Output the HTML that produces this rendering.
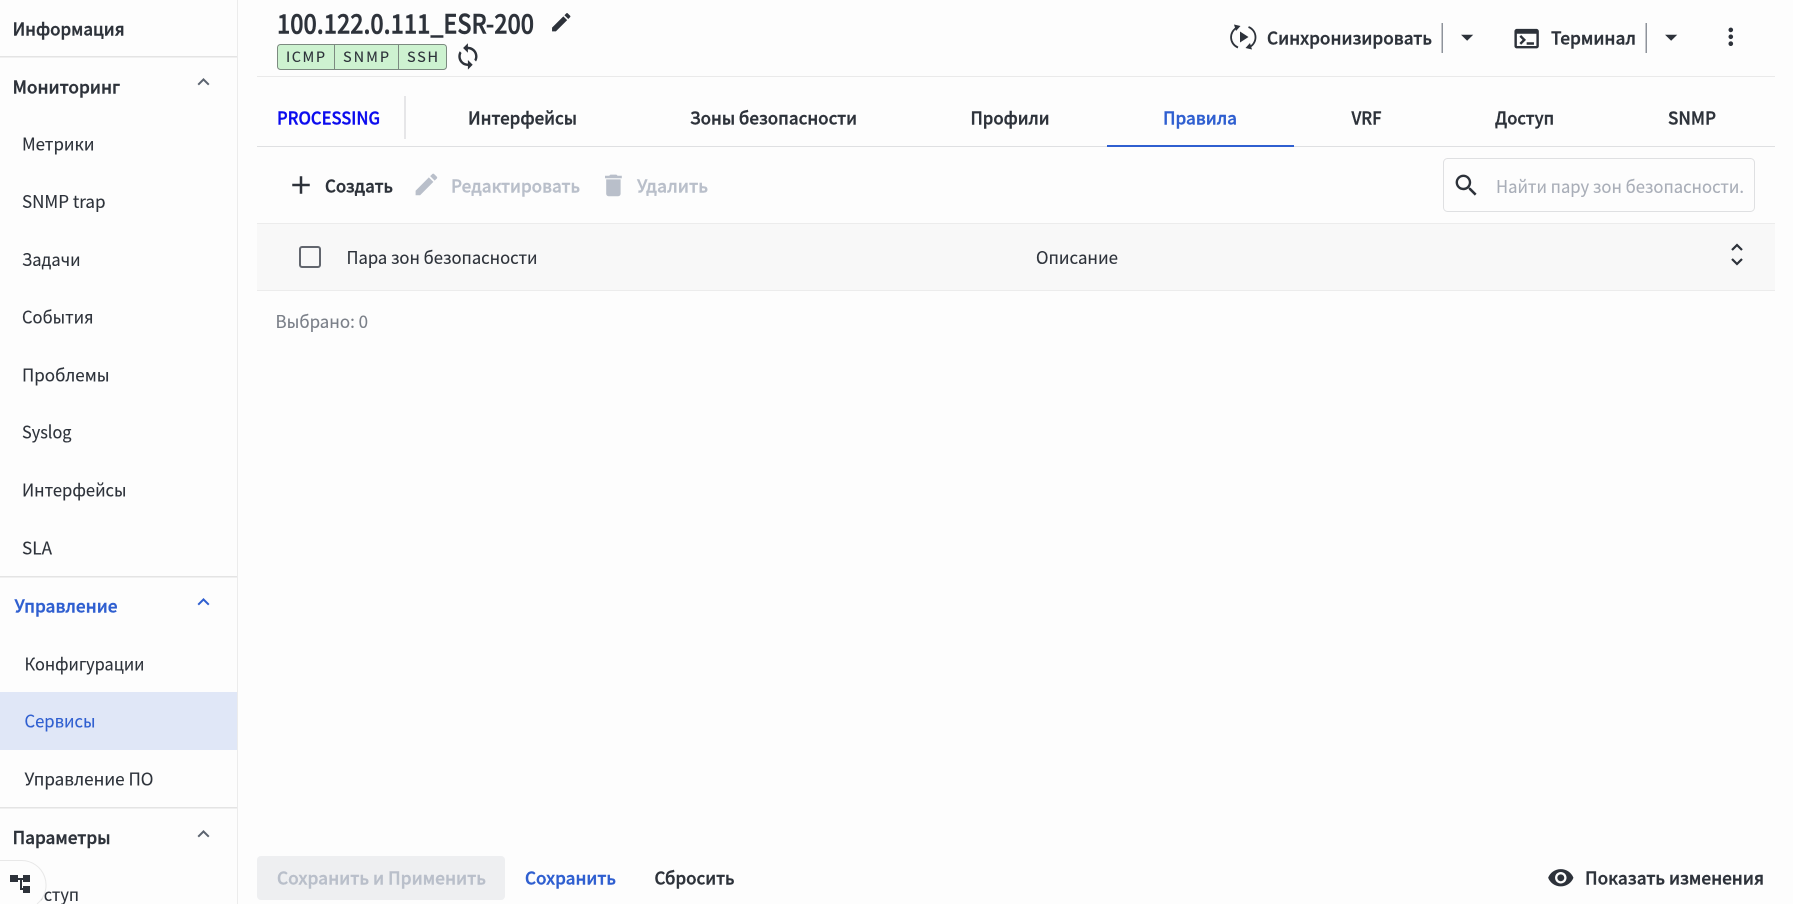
<!DOCTYPE html>
<html><head><meta charset="utf-8">
<style>
html,body{margin:0;padding:0;width:1793px;height:904px;overflow:hidden;background:#fdfdfd}
svg{display:block;overflow:hidden}
text{font-family:"Noto Sans CJK SC","Liberation Sans",sans-serif;font-size:17.4px;fill:#2d323a;stroke:#2d323a;stroke-width:.12px}
.m{font-weight:500;stroke-width:.4px}
.b{fill:#2f5fd0;stroke:#2f5fd0}
.d{fill:#b9bfca;stroke:#b9bfca}
</style></head><body>
<svg width="1793" height="904" viewBox="0 0 1793 904" xmlns="http://www.w3.org/2000/svg">
<rect width="1793" height="904" fill="#fdfdfd"/>
<!-- sidebar -->
<rect x="237" y="0" width="1" height="904" fill="#ececec"/>
<rect x="0" y="56" width="237" height="1.5" fill="#e4e4e4"/>
<rect x="0" y="576" width="237" height="1.5" fill="#e4e4e4"/>
<rect x="0" y="807" width="237" height="1.5" fill="#e4e4e4"/>
<rect x="0" y="692" width="237" height="58" fill="#e0e7f7"/>
<text class="m" x="12.6" y="35.5" textLength="112" lengthAdjust="spacingAndGlyphs">Информация</text>
<text class="m" x="12.6" y="93.5" textLength="107.5" lengthAdjust="spacingAndGlyphs">Мониторинг</text>
<text x="22" y="150.5" textLength="72.5" lengthAdjust="spacingAndGlyphs">Метрики</text>
<text x="22" y="208" textLength="83.5" lengthAdjust="spacingAndGlyphs">SNMP trap</text>
<text x="22" y="266" textLength="58.500" lengthAdjust="spacingAndGlyphs">Задачи</text>
<text x="22" y="323.500" textLength="71.500" lengthAdjust="spacingAndGlyphs">События</text>
<text x="22" y="381.500" textLength="87.500" lengthAdjust="spacingAndGlyphs">Проблемы</text>
<text x="22" y="438.500" textLength="49.500" lengthAdjust="spacingAndGlyphs">Syslog</text>
<text x="22" y="496.500" textLength="104.500" lengthAdjust="spacingAndGlyphs">Интерфейсы</text>
<text x="22" y="554.500" textLength="30" lengthAdjust="spacingAndGlyphs">SLA</text>
<text class="m b" x="14.500" y="612.500" textLength="103" lengthAdjust="spacingAndGlyphs">Управление</text>
<text x="24.500" y="670.500" textLength="120" lengthAdjust="spacingAndGlyphs">Конфигурации</text>
<text class="b" x="24.500" y="727.500" textLength="71" lengthAdjust="spacingAndGlyphs">Сервисы</text>
<text x="24.500" y="785.500" textLength="129" lengthAdjust="spacingAndGlyphs">Управление ПО</text>
<text class="m" x="12.600" y="844" textLength="98" lengthAdjust="spacingAndGlyphs">Параметры</text>
<svg x="0" y="880" width="237" height="24" viewBox="0 880 237 24"><text x="22" y="901" textLength="57" lengthAdjust="spacingAndGlyphs">Доступ</text></svg>
<path fill="#5c6470" transform="translate(191.500,70)" d="M12 8l-6 6 1.410 1.410L12 10.830l4.590 4.580L18 14z"/>
<path fill="#2f5fd0" transform="translate(191.500,590)" d="M12 8l-6 6 1.410 1.410L12 10.830l4.590 4.580L18 14z"/>
<path fill="#5c6470" transform="translate(191.500,822)" d="M12 8l-6 6 1.410 1.410L12 10.830l4.590 4.580L18 14z"/>
<path d="M0 860.500H21A24.500 24.500 0 0 1 37 904H0Z" fill="#fdfdfd"/>
<path d="M0 860.500H21A24.500 24.500 0 0 1 37 904" fill="none" stroke="#e8e8e8"/>
<path fill="#2d323a" d="M10 875h8v3h5v-3h7v7h-7v-2h-1v8h1v-2h7v7h-7v-3h-3v-10h-2v2h-8z"/>
<!-- header -->
<text class="m" x="277" y="33.500" style="font-size:26.500px;stroke-width:.55px" textLength="257" lengthAdjust="spacingAndGlyphs">100.122.0.111_ESR-200</text>
<path fill="#2d323a" transform="translate(549,10) scale(1.020)" d="M3 17.250V21h3.750L17.810 9.940l-3.750-3.750L3 17.250zM20.710 7.040c.39-.39.39-1.020 0-1.410l-2.340-2.340c-.39-.39-1.020-.39-1.410 0l-1.830 1.830 3.750 3.750 1.830-1.830z"/>
<rect x="277.500" y="44.500" width="169" height="25" rx="3" fill="#cdf2d0" stroke="#7c8a80"/>
<rect x="334" y="45" width="1" height="24" fill="#7c8a80"/>
<rect x="398" y="45" width="1" height="24" fill="#7c8a80"/>
<text x="286" y="62" style="font-size:14.500px" textLength="39" lengthAdjust="spacing">ICMP</text>
<text x="343" y="62" style="font-size:14.500px" textLength="46" lengthAdjust="spacing">SNMP</text>
<text x="407" y="62" style="font-size:14.500px" textLength="31" lengthAdjust="spacing">SSH</text>
<path fill="#2d323a" transform="translate(453.500,42) scale(1.200)" d="M12 4V1L8 5l4 4V6c3.310 0 6 2.690 6 6 0 1.010-.25 1.970-.7 2.800l1.460 1.460C19.540 15.030 20 13.570 20 12c0-4.420-3.580-8-8-8zm0 14c-3.310 0-6-2.690-6-6 0-1.010.25-1.970.7-2.800L5.240 7.740C4.460 8.970 4 10.430 4 12c0 4.420 3.580 8 8 8v3l4-4-4-4v3z"/>
<!-- top actions -->
<g fill="none" stroke="#2d323a" stroke-width="1.800">
<path d="M1237 27.500a11 11 0 0 0 1 20"/><path d="M1248.500 27a11 11 0 0 1 0 20.500"/>
</g>
<path fill="#2d323a" d="M1234 24.500l6.500 1.500-4.500 5zM1252 49.500l-6.500-1.500 4.500-5zM1240 31.500l8.500 5.500-8.500 5.500z"/>
<text class="m" x="1267" y="44.500" textLength="165" lengthAdjust="spacingAndGlyphs">Синхронизировать</text>
<rect x="1441.500" y="23" width="1.500" height="30" fill="#8e939b"/>
<path fill="#2d323a" transform="translate(1452.500,22.500) scale(1.220)" d="M7 10l5 5 5-5z"/>
<path fill="#2d323a" transform="translate(1512,24) scale(1.220)" d="M20 4H4c-1.100 0-2 .9-2 2v12c0 1.100.9 2 2 2h16c1.100 0 2-.9 2-2V6c0-1.100-.9-2-2-2zm0 14H4V8h16v10zm-2-1h-6v-2h6v2zM7.500 17l-1.410-1.410L8.670 13l-2.590-2.590L7.500 9l4 4-4 4z"/>
<text class="m" x="1551" y="44.500" textLength="85" lengthAdjust="spacingAndGlyphs">Терминал</text>
<rect x="1645.500" y="23" width="1.500" height="30" fill="#8e939b"/>
<path fill="#2d323a" transform="translate(1656.500,22.500) scale(1.220)" d="M7 10l5 5 5-5z"/>
<path fill="#2d323a" transform="translate(1717,23) scale(1.150)" d="M12 8c1.100 0 2-.9 2-2s-.9-2-2-2-2 .9-2 2 .9 2 2 2zm0 2c-1.100 0-2 .9-2 2s.9 2 2 2 2-.9 2-2-.9-2-2-2zm0 6c-1.100 0-2 .9-2 2s.9 2 2 2 2-.9 2-2-.9-2-2-2z"/>
<rect x="257" y="76" width="1518" height="1" fill="#eaeaea"/>
<!-- tabs -->
<text class="m" x="277" y="124.500" style="fill:#0b0bee;stroke:#0b0bee" textLength="103" lengthAdjust="spacingAndGlyphs">PROCESSING</text>
<rect x="404" y="96" width="2" height="43" fill="#e6e6e8"/>
<text class="m" x="468" y="124.500" textLength="109" lengthAdjust="spacingAndGlyphs">Интерфейсы</text>
<text class="m" x="690" y="124.500" textLength="167" lengthAdjust="spacingAndGlyphs">Зоны безопасности</text>
<text class="m" x="970.500" y="124.500" textLength="79" lengthAdjust="spacingAndGlyphs">Профили</text>
<text class="m b" x="1163" y="124.500" textLength="74" lengthAdjust="spacingAndGlyphs">Правила</text>
<text class="m" x="1351.500" y="124.500" textLength="30" lengthAdjust="spacingAndGlyphs">VRF</text>
<text class="m" x="1495" y="124.500" textLength="59" lengthAdjust="spacingAndGlyphs">Доступ</text>
<text class="m" x="1668" y="124.500" textLength="48" lengthAdjust="spacingAndGlyphs">SNMP</text>
<rect x="257" y="146" width="1518" height="1" fill="#dfe0e2"/>
<rect x="1107" y="145" width="187" height="2" fill="#2f5fd0"/>
<!-- toolbar -->
<path fill="#2d323a" transform="translate(286,170) scale(1.250)" d="M19 13h-6v6h-2v-6H5v-2h6V5h2v6h6v2z"/>
<text class="m" x="325" y="192.500" textLength="68" lengthAdjust="spacingAndGlyphs">Создать</text>
<path fill="#b9bfca" transform="translate(412,170) scale(1.200)" d="M3 17.250V21h3.750L17.810 9.940l-3.750-3.750L3 17.250zM20.710 7.040c.39-.39.39-1.020 0-1.410l-2.340-2.340c-.39-.39-1.020-.39-1.410 0l-1.830 1.830 3.750 3.750 1.830-1.830z"/>
<text class="m d" x="451" y="192.500" textLength="129" lengthAdjust="spacingAndGlyphs">Редактировать</text>
<path fill="#b9bfca" transform="translate(599,171) scale(1.200)" d="M6 19c0 1.100.9 2 2 2h8c1.100 0 2-.9 2-2V7H6v12zM19 4h-3.500l-1-1h-5l-1 1H5v2h14V4z"/>
<text class="m d" x="637" y="192.500" textLength="71" lengthAdjust="spacingAndGlyphs">Удалить</text>
<rect x="1443.500" y="158.500" width="311" height="53" rx="4" fill="#fdfdfd" stroke="#dfe0e2"/>
<path fill="#2d323a" transform="translate(1452,171) scale(1.200)" d="M15.500 14h-.79l-.28-.27C15.410 12.590 16 11.110 16 9.500 16 5.910 13.090 3 9.500 3S3 5.910 3 9.500 5.910 16 9.500 16c1.610 0 3.090-.59 4.230-1.570l.27.28v.79l5 4.990L20.490 19l-4.990-5zm-6 0C7.010 14 5 11.990 5 9.500S7.010 5 9.500 5 14 7.010 14 9.500 11.990 14 9.500 14z"/>
<text x="1496" y="193" textLength="248" lengthAdjust="spacingAndGlyphs" style="fill:#a9aeb8;stroke:#a9aeb8">Найти пару зон безопасности.</text>
<!-- table -->
<rect x="257" y="223" width="1518" height="67" fill="#f8f8f8"/>
<rect x="257" y="223" width="1518" height="1" fill="#ececec"/>
<rect x="257" y="290" width="1518" height="1" fill="#ececec"/>
<rect x="300" y="247" width="20" height="20" rx="2" fill="none" stroke="#62666e" stroke-width="2"/>
<text x="346.500" y="264" textLength="191" lengthAdjust="spacingAndGlyphs">Пара зон безопасности</text>
<text x="1036" y="264" textLength="82" lengthAdjust="spacingAndGlyphs">Описание</text>
<g fill="none" stroke="#2d323a" stroke-width="2.200">
<path d="M1732 250l5-5 5 5"/><path d="M1732 259l5 5 5-5"/>
</g>
<text x="275.500" y="328" textLength="92.500" lengthAdjust="spacingAndGlyphs" style="fill:#7a7f88;stroke:#7a7f88">Выбрано: 0</text>
<!-- footer -->
<rect x="257" y="856" width="248" height="44" rx="4" fill="#eeeff1"/>
<text class="m d" x="277" y="884.500" textLength="209" lengthAdjust="spacingAndGlyphs">Сохранить и Применить</text>
<text class="m b" x="525" y="884.500" textLength="91" lengthAdjust="spacingAndGlyphs">Сохранить</text>
<text class="m" x="654.500" y="884.500" textLength="80" lengthAdjust="spacingAndGlyphs">Сбросить</text>
<path fill="#2d323a" transform="translate(1547,864) scale(1.150)" d="M12 4.500C7 4.500 2.730 7.610 1 12c1.730 4.390 6 7.500 11 7.500s9.270-3.110 11-7.500c-1.730-4.390-6-7.500-11-7.500zM12 17c-2.760 0-5-2.240-5-5s2.240-5 5-5 5 2.240 5 5-2.240 5-5 5zm0-8c-1.660 0-3 1.340-3 3s1.340 3 3 3 3-1.340 3-3-1.340-3-3-3z"/>
<text class="m" x="1585" y="884.500" textLength="179" lengthAdjust="spacingAndGlyphs">Показать изменения</text>
</svg>
</body></html>
